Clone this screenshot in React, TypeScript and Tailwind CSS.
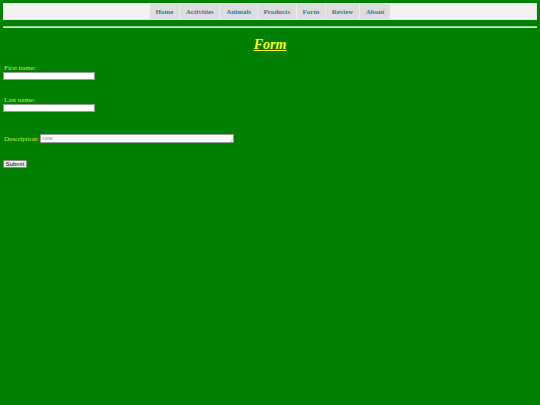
import React from "react";

const items = ["Home", "Activities", "Animals", "Products", "Form", "Review", "About"];

export default function App() {
  return (
    <div className="min-h-screen bg-[#008000] pt-[3px] px-[3px] font-['Liberation_Serif',serif]">
      <nav className="h-[17px] border border-[#e6e6e6] bg-[#f2f2f2] flex justify-center">
        <ul className="flex h-full bg-[#dddddd]">
          {items.map((it, i) => (
            <li
              key={it}
              className={`flex items-center pt-[1px] px-[5.7px] h-full text-[7px] font-bold text-[#3d74a6] ${i < items.length - 1 ? "border-r border-[#ececec]" : ""}`}
            >
              {it}
            </li>
          ))}
        </ul>
      </nav>
      <div className="mt-[6px] h-[2px] border-t border-[#9cc89c] border-b border-b-[#cfe3cf]" />
      <h1 className="mt-[9px] text-center text-[14px] leading-[16px] font-bold italic underline text-[#ffff1a]">
        Form
      </h1>
      <div className="mt-[11px] text-[7px] leading-[8px] text-[#c4f23a] pl-[1px]">First name:</div>
      <div className="w-[92px] h-[8px] bg-white border border-[#9a9a9a]" />
      <div className="mt-[16px] text-[7px] leading-[8px] text-[#c4f23a] pl-[1px]">Last name:</div>
      <div className="w-[92px] h-[8px] bg-white border border-[#9a9a9a]" />
      <div className="mt-[22px] flex items-end gap-[1px]">
        <span className="text-[7px] leading-[7px] text-[#c4f23a] pl-[1px]">Description:</span>
        <div className="relative w-[194px] h-[9px] bg-white border border-[#9a9a9a] flex items-start pl-[1px]">
          <span className="text-[5px] leading-[6px] text-[#8a8a8a] font-['Liberation_Sans',sans-serif]">none</span>
          <svg className="absolute right-0 bottom-0" width="3" height="3" viewBox="0 0 3 3">
            <path d="M0 3 L3 0 M1.5 3 L3 1.5" stroke="#999" strokeWidth="0.5" />
          </svg>
        </div>
      </div>
      <div className="mt-[17px]">
        <div className="w-[24px] h-[8px] bg-[#efefef] border border-[#8a8a8a] rounded-[1px] flex items-center justify-center text-[6px] leading-none text-black font-['Liberation_Sans',sans-serif]">
          Submit
        </div>
      </div>
    </div>
  );
}
